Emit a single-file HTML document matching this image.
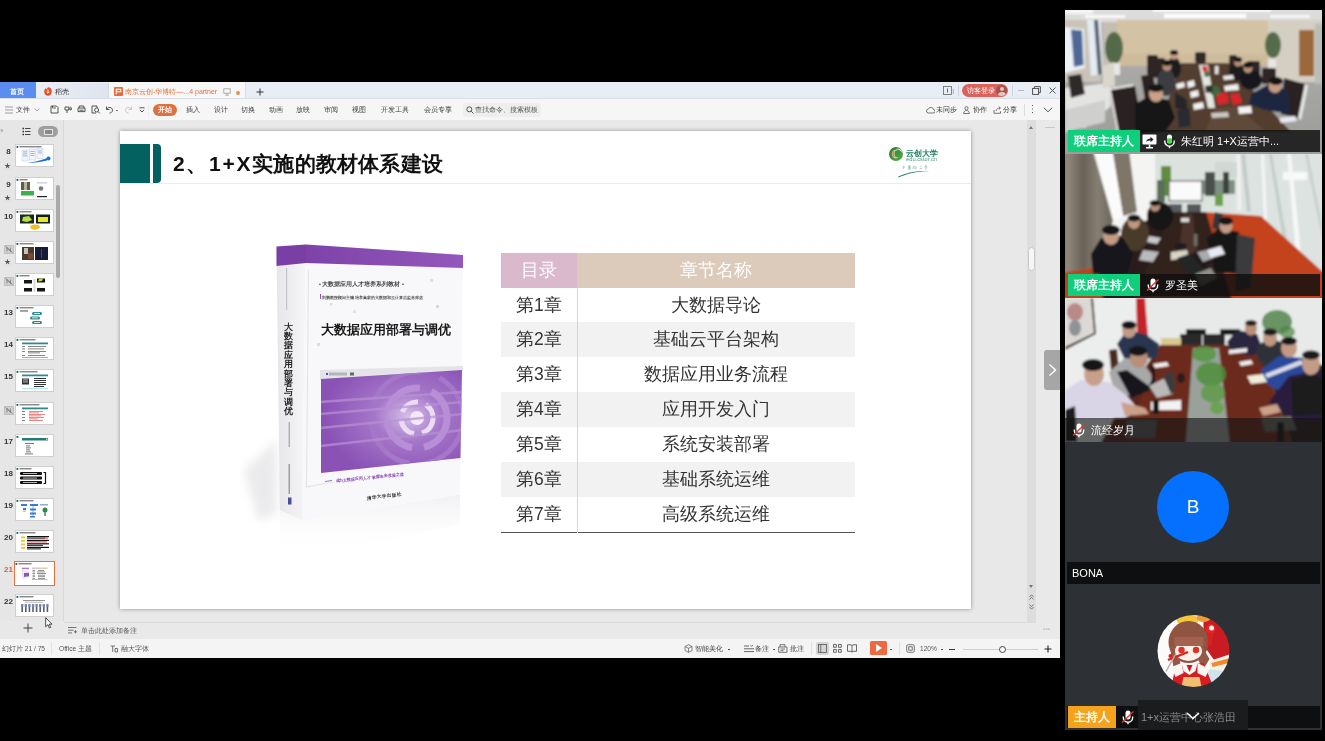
<!DOCTYPE html>
<html lang="zh">
<head>
<meta charset="utf-8">
<title>Meeting</title>
<style>
*{box-sizing:border-box;margin:0;padding:0}
html,body{width:1325px;height:741px;overflow:hidden;background:#000;font-family:"Liberation Sans",sans-serif;}
.a{position:absolute}
#win{position:absolute;left:0;top:82px;width:1060px;height:576px;background:#e8e8e8;overflow:hidden;will-change:transform}
#panel{will-change:transform}
#tabbar{position:absolute;left:0;top:0;width:1060px;height:16px;background:#e9edf6}
#toolbar{position:absolute;left:0;top:16px;width:1060px;height:22px;background:#f6f6f6;border-top:1px solid #d9dde6}
.t8{font-size:8px;color:#444;white-space:nowrap;line-height:10px}
.menu{position:absolute;top:5px;font-size:6.8px;color:#3c3c3c;line-height:10px;white-space:nowrap}
#toolbar>*{margin-top:0.8px}
#left{position:absolute;left:0;top:38px;width:64px;height:501px;background:#e6e6e6;border-right:1px solid #d8d8d8}
.th{position:absolute;left:15px;width:39px;height:23px;background:#fff;border:1px solid #cfcfcf;overflow:hidden}
.num{position:absolute;left:2px;width:13px;text-align:center;font-size:8px;font-weight:bold;color:#333;line-height:9px}
#slide{position:absolute;left:120px;top:49px;width:851px;height:478px;background:#fff;box-shadow:0 0 4px rgba(0,0,0,.38)}
#status{position:absolute;left:0;top:557px;width:1060px;height:19px;background:#f4f4f4}
#notes{position:absolute;left:64px;top:540px;width:972px;height:17px;background:#e9e9e9;border-top:1px solid #dcdcdc}
table{border-collapse:collapse}
#toc{position:absolute;left:381px;top:121.6px;width:354px;border-bottom:1.5px solid #555}
#toc td{height:34.9px;text-align:center;font-size:17.5px;color:#333;padding:0;line-height:34.9px}
#toc td:first-child{width:76px;border-right:1px solid #d4d4d4}
#toc tr:nth-child(odd) td{background:#f2f2f2}
#toc tr:first-child td{background:#dccbbb;color:#fff;height:34.9px}
#toc tr:first-child td:first-child{background:#dbb9cc;border-right:none}
.tile{position:absolute;left:1065px;width:257px;height:144px;overflow:hidden;background:#2d3135}
.bar{position:absolute;left:3px;right:2px;height:22px;background:rgba(16,16,16,.84)}
.lab{position:absolute;left:0;top:0;height:22px;color:#fff;font-size:11.5px;font-weight:bold;line-height:22px;text-align:center;letter-spacing:0.2px}
.nm{position:absolute;top:0;color:#fff;font-size:11px;line-height:22px;white-space:nowrap}
</style>
</head>
<body>
<div id="win">
  <div id="tabbar">
    <div class="a" style="left:0;top:0;width:36px;height:16px;background:#5b8df0"></div>
    <div class="a" style="left:10px;top:4.8px;font-size:7px;line-height:10px;color:#fff;font-weight:bold">首页</div>
    <div class="a" style="left:36px;top:1px;width:73px;height:15px;background:linear-gradient(90deg,#eaeef6,#dfe4ef);border-right:1px solid #d3d9e6"></div>
    <svg class="a" style="left:44px;top:4.8px" width="8" height="9" viewBox="0 0 8 9"><path d="M4 0.3 C6.4 0.3 7.8 2 7.8 4.6 C7.8 7.2 6.2 8.8 4 8.8 C1.8 8.8 0.2 7.2 0.2 4.6 C0.2 3 1 1.6 2 0.9 L2.4 2.6 Z" fill="#ea4c1d"/><path d="M4 2.5v3.3M2.6 4.8L4 6.2l1.4-1.4" stroke="#fff" stroke-width="1" fill="none"/></svg>
    <div class="a" style="left:55px;top:4.8px;font-size:6.7px;line-height:10px;color:#333">稻壳</div>
    <div class="a" style="left:109px;top:0;width:137px;height:17px;background:#f7f7f7;border-right:1px solid #d9dde6"></div>
    <svg class="a" style="left:114px;top:4.8px" width="9" height="9" viewBox="0 0 9 9"><rect width="9" height="9" rx="1" fill="#ea6a3b"/><path d="M2.3 7.2V2.4h4.4v2.4H2.6" stroke="#fff" stroke-width="1.1" fill="none"/></svg>
    <div class="a" style="left:125px;top:4.8px;font-size:7px;line-height:10px;color:#e0703f;white-space:nowrap">南京云创-华博特—...4 partner</div>
    <svg class="a" style="left:223px;top:5.8px" width="8" height="8" viewBox="0 0 8 8"><rect x="0.8" y="0.8" width="6.4" height="4.4" fill="none" stroke="#9a9a9a" stroke-width="0.8"/><path d="M4 5.2v1.8M2.2 7.2h3.6" stroke="#9a9a9a" stroke-width="0.8"/></svg>
    <div class="a" style="left:236px;top:8.8px;width:4px;height:4px;border-radius:2px;background:#e8904f"></div>
    <svg class="a" style="left:256px;top:5.8px" width="8" height="8" viewBox="0 0 8 8"><path d="M4 0.5v7M0.5 4h7" stroke="#333" stroke-width="1"/></svg>
    <svg class="a" style="left:943px;top:4px" width="12" height="10" viewBox="0 0 12 10"><rect x="0.5" y="0.5" width="8" height="8" fill="none" stroke="#666" stroke-width="0.8"/><path d="M4.5 2.5v4" stroke="#555" stroke-width="0.9"/><path d="M10.3 3v5" stroke="#999" stroke-width="0.8"/></svg>
    <div class="a" style="left:958px;top:3px;width:1px;height:11px;background:#cfd3dc"></div>
    <div class="a" style="left:962px;top:2px;width:46px;height:13px;border-radius:7px;background:#d9635d"></div>
    <div class="a" style="left:966.5px;top:4px;font-size:6.8px;line-height:10px;color:#fff;white-space:nowrap">访客登录</div>
    <div class="a" style="left:996px;top:3px;width:11px;height:11px;border-radius:6px;background:#a8504e;overflow:hidden"><div class="a" style="left:3.5px;top:1.5px;width:4px;height:4px;border-radius:2px;background:#e6c4c2"></div><div class="a" style="left:1.5px;top:7.3px;width:8px;height:7px;border-radius:4px;background:#e6c4c2"></div></div>
    <div class="a" style="left:1012px;top:3px;width:1px;height:11px;background:#cfd3dc"></div>
    <div class="a" style="left:1018px;top:8px;width:6px;height:1px;background:#bbb"></div>
    <svg class="a" style="left:1032px;top:4px" width="9" height="9" viewBox="0 0 9 9"><rect x="0.6" y="2.4" width="6" height="6" fill="none" stroke="#444" stroke-width="0.9"/><path d="M2.4 2.4V0.6h6v6H6.6" fill="none" stroke="#444" stroke-width="0.9"/></svg>
    <svg class="a" style="left:1049px;top:5px" width="7" height="7" viewBox="0 0 7 7"><path d="M0.5 0.5l6 6M6.5 0.5l-6 6" stroke="#444" stroke-width="0.9"/></svg>
  </div>
  <div id="toolbar">
    <svg class="a" style="left:5px;top:6px" width="8" height="8" viewBox="0 0 8 8"><path d="M0 1h8M0 4h8M0 7h8" stroke="#666" stroke-width="0.6"/></svg>
    <div class="menu" style="left:16px">文件</div>
    <svg class="a" style="left:34px;top:8px" width="6" height="4" viewBox="0 0 6 4"><path d="M0.5 0.5l2.5 2.5l2.5-2.5" stroke="#888" stroke-width="0.7" fill="none"/></svg>
    <svg class="a" style="left:50px;top:5px" width="9" height="9" viewBox="0 0 9 9"><path d="M1 1h5.5l1.5 1.5v5.5h-7z" fill="none" stroke="#444" stroke-width="0.9"/><path d="M2.5 1v2h3.5" fill="none" stroke="#444" stroke-width="0.8"/></svg>
    <svg class="a" style="left:64px;top:5px" width="9" height="9" viewBox="0 0 9 9"><path d="M1 2h4v3h-4zM4 4h4M6 2c2 0 2 3 0 3M3 5v3" fill="none" stroke="#444" stroke-width="0.9"/></svg>
    <svg class="a" style="left:77px;top:5px" width="9" height="9" viewBox="0 0 9 9"><path d="M2.2 3V1h4.6v2M1 3h7v3.6h-7zM2.4 5.2h4.2" fill="none" stroke="#444" stroke-width="0.9"/></svg>
    <svg class="a" style="left:91px;top:5px" width="10" height="9" viewBox="0 0 10 9"><path d="M5 8h-4v-7h5v2" fill="none" stroke="#444" stroke-width="0.9"/><circle cx="5.6" cy="5" r="2" fill="none" stroke="#444" stroke-width="0.9"/><path d="M7 6.6l1.8 1.8" stroke="#444" stroke-width="0.9"/></svg>
    <svg class="a" style="left:105px;top:5px" width="9" height="9" viewBox="0 0 9 9"><path d="M1.5 1.5v3h3M1.7 4.3C3 1.5 7.5 2 7.5 5.2 7.500 7 6 8 4.500 8" fill="none" stroke="#444" stroke-width="0.9"/></svg>
    <div class="a" style="left:116px;top:10px;width:2px;height:1px;background:#777"></div>
    <svg class="a" style="left:124px;top:5px" width="9" height="9" viewBox="0 0 9 9"><path d="M7.500 1.500v3h-3M7.300 4.300C6 1.500 1.500 2 1.500 5.200 1.500 7 3 8 4.500 8" fill="none" stroke="#c4c4c4" stroke-width="0.9"/></svg>
    <svg class="a" style="left:139px;top:7px" width="6" height="6" viewBox="0 0 6 6"><path d="M0.500 0.800h5M0.800 2.800l2.200 2.200l2.200-2.200" fill="none" stroke="#444" stroke-width="0.9"/></svg>
    <div class="a" style="left:148px;top:3px;width:1px;height:14px;background:#ebebeb"></div>
    <div class="a" style="left:153px;top:4px;width:24px;height:12px;border-radius:6px;background:#e0703f;color:#fff;font-size:7px;font-weight:bold;line-height:12px;text-align:center">开始</div>
    <div class="menu" style="left:186px">插入</div><div class="menu" style="left:214px">设计</div><div class="menu" style="left:241px">切换</div><div class="menu" style="left:269px">动画</div><div class="menu" style="left:296px">放映</div><div class="menu" style="left:324px">审阅</div><div class="menu" style="left:352px">视图</div><div class="menu" style="left:381px">开发工具</div><div class="menu" style="left:424px">会员专享</div>
    <div class="a" style="left:463px;top:3px;width:78px;height:14px;border-radius:3px;background:#eeeeee"></div>
    <svg class="a" style="left:466px;top:6px" width="8" height="8" viewBox="0 0 8 8"><circle cx="3.300" cy="3.300" r="2.500" fill="none" stroke="#444" stroke-width="0.9"/><path d="M5.200 5.200l2.300 2.300" stroke="#444" stroke-width="0.9"/></svg>
    <div class="menu" style="left:475px;color:#555;font-size:6.7px">查找命令、搜索模板</div>
    <svg class="a" style="left:926px;top:6px" width="9" height="8" viewBox="0 0 9 8"><path d="M2.500 7a2 2 0 0 1 0-4a2.600 2.600 0 0 1 5 0.600a1.700 1.700 0 0 1 -0.300 3.400z" fill="none" stroke="#555" stroke-width="0.8"/></svg>
    <div class="menu" style="left:936px">未同步</div>
    <svg class="a" style="left:963px;top:6px" width="8" height="8" viewBox="0 0 8 8"><circle cx="3.500" cy="2.200" r="1.600" fill="none" stroke="#555" stroke-width="0.8"/><path d="M0.600 7.500c0-4 5.800-4 5.800 0z" fill="none" stroke="#555" stroke-width="0.8"/></svg>
    <div class="menu" style="left:973px">协作</div>
    <svg class="a" style="left:993px;top:6px" width="9" height="8" viewBox="0 0 9 8"><path d="M1 4v3.300h6.500v-2M3 5c0.500-2.500 2.500-3 4-3M5.800 0.500l1.700 1.500l-1.700 1.500" fill="none" stroke="#555" stroke-width="0.8"/></svg>
    <div class="menu" style="left:1003px">分享</div>
    <div class="a" style="left:1024px;top:4px;width:1px;height:12px;background:#dcdcdc"></div>
    <div class="a" style="left:1032px;top:5px;width:1.2px;height:1.2px;background:#555;box-shadow:0 3.5px 0 #555,0 7px 0 #555"></div>
    <svg class="a" style="left:1043px;top:7px" width="10" height="6" viewBox="0 0 10 6"><path d="M0.800 0.800l4.200 4l4.200-4" fill="none" stroke="#444" stroke-width="0.9"/></svg>
  </div>
  <div id="left">
    <div class="a" style="left:0;top:7px;font-size:7px;line-height:8px;color:#999;letter-spacing:-1px">››</div>
    <svg class="a" style="left:22px;top:7px" width="9" height="9" viewBox="0 0 9 9"><path d="M0.500 1.500h1.500M0.500 4.500h1.500M0.500 7.500h1.500" stroke="#333" stroke-width="1.400"/><path d="M3 1.500h5.500M3 4.500h5.500M3 7.500h5.500" stroke="#333" stroke-width="0.900"/></svg>
    <div class="a" style="left:38px;top:6px;width:20px;height:11px;border-radius:6px;background:#9e9e9e"></div>
    <div class="a" style="left:43.500px;top:8.500px;width:9px;height:6px;border:1px solid #e4e4e4;background:#8a8a8a"></div>
    <div class="a" style="left:56px;top:65px;width:4px;height:93px;border-radius:2px;background:#a9a9a9"></div>
    <div class="th" style="top:24.3px;"><svg class="a" style="left:-1px;top:-1px" width="39" height="23" viewBox="0 0 39 23"><rect x="1.500" y="2" width="1.800" height="1.800" fill="#03615f"/><rect x="4.500" y="2.300" width="22" height="1" fill="#555"/><g fill="#f2f5fb" stroke="#a9bce0" stroke-width="0.400"><rect x="7" y="6" width="6" height="11"/><rect x="14.500" y="5" width="6" height="11"/><rect x="22" y="4.500" width="6" height="10"/></g><g fill="#8fa3c8"><rect x="8" y="7.500" width="4" height="0.800"/><rect x="8" y="9.500" width="4" height="0.800"/><rect x="8" y="11.500" width="4" height="0.800"/><rect x="15.500" y="7" width="4" height="0.800"/><rect x="15.500" y="9" width="4" height="0.800"/><rect x="15.500" y="11" width="4" height="0.800"/><rect x="23" y="6.500" width="4" height="0.800"/><rect x="23" y="8.500" width="4" height="0.800"/></g><path d="M12 19c8-1 16-3 21-5.500l-1 3c-6 1.500-13 2.500-20 2.500z" fill="#1f6fd0"/><circle cx="33.500" cy="14.500" r="2" fill="#1f6fd0"/></svg></div><div class="num" style="top:27.3px;color:#333">8</div><div class="a" style="left:3.5px;top:41.8px;font-size:7px;line-height:8px;color:#555">★</div><div class="th" style="top:56.5px;"><svg class="a" style="left:-1px;top:-1px" width="39" height="23" viewBox="0 0 39 23"><rect x="1.500" y="2" width="1.800" height="1.800" fill="#03615f"/><rect x="4.500" y="2.300" width="8" height="1" fill="#555"/><rect x="6" y="5" width="9" height="8" fill="#5a6048"/><rect x="9" y="5" width="3" height="8" fill="#b8b4a0"/><rect x="6" y="14" width="13" height="4.500" fill="#3cb04c"/><circle cx="26" cy="11.500" r="2.300" fill="#7a7a7a"/><rect x="22" y="5.500" width="10" height="0.800" fill="#9ad"/><rect x="22" y="19" width="10" height="1.200" fill="#222"/></svg></div><div class="num" style="top:59.5px;color:#333">9</div><div class="a" style="left:3.5px;top:74.0px;font-size:7px;line-height:8px;color:#555">★</div><div class="th" style="top:88.6px;"><svg class="a" style="left:-1px;top:-1px" width="39" height="23" viewBox="0 0 39 23"><rect x="1.500" y="2" width="1.800" height="1.800" fill="#03615f"/><rect x="4.500" y="2.300" width="12" height="1" fill="#555"/><rect x="5" y="5.500" width="14" height="9" fill="#1a2a2a"/><polygon points="8,8 14,7 17,11 12,13 7,12" fill="#b8e038"/><rect x="21" y="5.500" width="14" height="9" fill="#14201c"/><rect x="23" y="8" width="10" height="5" fill="#e8e820"/><polygon points="15,17 19,15.500 24,16 25,19 20,21 16,20" fill="#f0c020"/></svg></div><div class="num" style="top:91.6px;color:#333">10</div><div class="th" style="top:120.8px;"><svg class="a" style="left:-1px;top:-1px" width="39" height="23" viewBox="0 0 39 23"><rect x="1.500" y="2" width="1.800" height="1.800" fill="#03615f"/><rect x="4.500" y="2.300" width="14" height="1" fill="#555"/><rect x="7" y="6" width="12" height="13" fill="#4a3a2e"/><rect x="9" y="7" width="4" height="6" fill="#c8c0b0"/><rect x="13" y="12" width="5" height="6" fill="#7a4a30"/><rect x="20" y="6" width="13" height="13" fill="#141c38"/><rect x="26" y="8" width="1" height="9" fill="#3a4a78"/></svg></div><svg class="a" style="left:4px;top:124.8px" width="10" height="9" viewBox="0 0 10 9"><rect x="0.500" y="0.500" width="9" height="8" fill="#cfcfcf" stroke="#9a9a9a" stroke-width="0.700" stroke-dasharray="1.200 0.800"/><path d="M1.500 1.500l7 6M3 2.500v4M3 2.500l3.500 4v-4" stroke="#777" stroke-width="0.800" fill="none"/></svg><div class="a" style="left:3.5px;top:138.2px;font-size:7px;line-height:8px;color:#555">★</div><div class="th" style="top:152.9px;"><svg class="a" style="left:-1px;top:-1px" width="39" height="23" viewBox="0 0 39 23"><rect x="1.500" y="2" width="1.800" height="1.800" fill="#03615f"/><rect x="4.500" y="2.300" width="10" height="1" fill="#555"/><g fill="#151515"><rect x="9" y="7" width="8" height="3.500"/><rect x="22" y="5.500" width="8" height="4"/><rect x="9" y="15" width="8" height="3.500"/><rect x="22" y="15" width="8" height="3.500"/></g><rect x="18.500" y="6" width="2" height="13" fill="#d8dde2"/><polygon points="24,6 28,5.500 27,8 23,8.500" fill="#c8d820"/></svg></div><svg class="a" style="left:4px;top:156.9px" width="10" height="9" viewBox="0 0 10 9"><rect x="0.500" y="0.500" width="9" height="8" fill="#cfcfcf" stroke="#9a9a9a" stroke-width="0.700" stroke-dasharray="1.200 0.800"/><path d="M1.500 1.500l7 6M3 2.500v4M3 2.500l3.500 4v-4" stroke="#777" stroke-width="0.800" fill="none"/></svg><div class="th" style="top:185.1px;"><svg class="a" style="left:-1px;top:-1px" width="39" height="23" viewBox="0 0 39 23"><rect x="1.500" y="2" width="1.800" height="1.800" fill="#03615f"/><rect x="4.500" y="2.300" width="14" height="1" fill="#555"/><rect x="5" y="5.500" width="8" height="0.900" fill="#333"/><g fill="#2f8a8a"><rect x="17" y="7" width="10" height="3" rx="1.500"/><rect x="15" y="11.500" width="10" height="3" rx="1.500"/><rect x="17" y="16" width="10" height="3" rx="1.500"/></g><g fill="#fff"><rect x="19" y="8" width="6" height="0.800"/><rect x="17" y="12.500" width="6" height="0.800"/><rect x="19" y="17" width="6" height="0.800"/></g></svg></div><div class="num" style="top:188.1px;color:#333">13</div><div class="th" style="top:217.2px;"><svg class="a" style="left:-1px;top:-1px" width="39" height="23" viewBox="0 0 39 23"><rect x="1.500" y="2" width="1.800" height="1.800" fill="#03615f"/><rect x="4.500" y="2.300" width="16" height="1" fill="#555"/><rect x="7" y="5.500" width="26" height="1.800" fill="#2f8a8a"/><g fill="#666"><rect x="7" y="9" width="3" height="0.800"/><rect x="13" y="9" width="18" height="0.800"/><rect x="7" y="11.500" width="3" height="0.800"/><rect x="13" y="11.500" width="16" height="0.800"/><rect x="7" y="14" width="3" height="0.800"/><rect x="13" y="14" width="18" height="0.800"/><rect x="13" y="15.500" width="12" height="0.800"/><rect x="7" y="18" width="3" height="0.800"/><rect x="13" y="18" width="17" height="0.800"/></g><rect x="7" y="20" width="26" height="0.600" fill="#2f8a8a"/></svg></div><div class="num" style="top:220.2px;color:#333">14</div><div class="th" style="top:249.4px;"><svg class="a" style="left:-1px;top:-1px" width="39" height="23" viewBox="0 0 39 23"><rect x="1.500" y="2" width="1.800" height="1.800" fill="#03615f"/><rect x="4.500" y="2.300" width="18" height="1" fill="#555"/><rect x="7" y="5.500" width="26" height="1.800" fill="#2f8a8a"/><g fill="#333"><rect x="7" y="9.500" width="7" height="6"/><rect x="19" y="9" width="12" height="1"/><rect x="19" y="11" width="12" height="1"/><rect x="19" y="13" width="12" height="1"/><rect x="19" y="15" width="12" height="1"/><rect x="19" y="17" width="10" height="1"/></g><rect x="8" y="10.500" width="5" height="0.800" fill="#ddd"/><rect x="8" y="12.500" width="5" height="0.800" fill="#ddd"/><rect x="7" y="19.500" width="26" height="0.600" fill="#7cc"/></svg></div><div class="num" style="top:252.4px;color:#333">15</div><div class="th" style="top:281.5px;"><svg class="a" style="left:-1px;top:-1px" width="39" height="23" viewBox="0 0 39 23"><rect x="1.500" y="2" width="1.800" height="1.800" fill="#03615f"/><rect x="4.500" y="2.300" width="20" height="1" fill="#555"/><rect x="7" y="5.500" width="26" height="1.800" fill="#2f8a8a"/><g fill="#666"><rect x="7" y="9" width="3" height="0.800"/><rect x="7" y="12" width="3" height="0.800"/><rect x="7" y="15" width="3" height="0.800"/><rect x="7" y="18" width="3" height="0.800"/></g><g fill="#e46a6a"><rect x="14" y="9" width="14" height="0.800"/><rect x="14" y="10.500" width="10" height="0.800"/><rect x="14" y="12" width="16" height="0.800"/><rect x="14" y="13.500" width="12" height="0.800"/><rect x="14" y="15" width="15" height="0.800"/><rect x="14" y="16.500" width="9" height="0.800"/><rect x="14" y="18" width="14" height="0.800"/></g></svg></div><svg class="a" style="left:4px;top:285.5px" width="10" height="9" viewBox="0 0 10 9"><rect x="0.500" y="0.500" width="9" height="8" fill="#cfcfcf" stroke="#9a9a9a" stroke-width="0.700" stroke-dasharray="1.200 0.800"/><path d="M1.500 1.500l7 6M3 2.500v4M3 2.500l3.500 4v-4" stroke="#777" stroke-width="0.800" fill="none"/></svg><div class="th" style="top:313.6px;"><svg class="a" style="left:-1px;top:-1px" width="39" height="23" viewBox="0 0 39 23"><rect x="1.500" y="2" width="1.800" height="1.800" fill="#03615f"/><rect x="4.500" y="2.300" width="0" height="1" fill="#555"/><rect x="7" y="4" width="26" height="2.500" fill="#1f7a7a"/><rect x="31" y="4.500" width="1.500" height="1.500" fill="#e8d040"/><g fill="#555"><rect x="10" y="9" width="9" height="0.800"/><rect x="11" y="11.500" width="4" height="0.800"/><rect x="11" y="13.500" width="5" height="0.800"/><rect x="11" y="15.500" width="4" height="0.800"/><rect x="11" y="17.500" width="5" height="0.800"/><rect x="10" y="19.500" width="8" height="0.800"/></g></svg></div><div class="num" style="top:316.6px;color:#333">17</div><div class="th" style="top:345.8px;"><svg class="a" style="left:-1px;top:-1px" width="39" height="23" viewBox="0 0 39 23"><rect x="1.500" y="2" width="1.800" height="1.800" fill="#03615f"/><rect x="4.500" y="2.300" width="12" height="1" fill="#555"/><g fill="#111"><rect x="5" y="6" width="22" height="3" rx="1"/><rect x="5" y="10.500" width="22" height="3" rx="1"/><rect x="5" y="15" width="22" height="3" rx="1"/></g><g fill="#fff"><rect x="8" y="7.200" width="14" height="0.700"/><rect x="8" y="11.700" width="14" height="0.700"/><rect x="8" y="16.200" width="14" height="0.700"/></g><path d="M28.500 6.500h2v11h-2" fill="none" stroke="#111" stroke-width="1.200"/></svg></div><div class="num" style="top:348.8px;color:#333">18</div><div class="th" style="top:377.9px;"><svg class="a" style="left:-1px;top:-1px" width="39" height="23" viewBox="0 0 39 23"><rect x="1.500" y="2" width="1.800" height="1.800" fill="#03615f"/><rect x="4.500" y="2.300" width="14" height="1" fill="#555"/><g fill="#3a7ad8"><rect x="6" y="6" width="6" height="2"/><rect x="15" y="6" width="8" height="2"/><rect x="8" y="10" width="3" height="2"/><rect x="15" y="10.500" width="6" height="2"/><rect x="15" y="14.500" width="6" height="2"/><rect x="15" y="18" width="5" height="1.500"/></g><rect x="8" y="12.500" width="3" height="1.500" fill="#e8d040"/><path d="M18 8v10" stroke="#3a7ad8" stroke-width="0.600"/><ellipse cx="30" cy="12" rx="2.500" ry="2.500" fill="#2f8a4a"/><rect x="29.300" y="13" width="1.400" height="5" fill="#2f8a4a"/><rect x="25" y="6" width="8" height="1.500" fill="#9ac"/></svg></div><div class="num" style="top:380.9px;color:#333">19</div><div class="th" style="top:410.1px;"><svg class="a" style="left:-1px;top:-1px" width="39" height="23" viewBox="0 0 39 23"><rect x="1.500" y="2" width="1.800" height="1.800" fill="#03615f"/><rect x="4.500" y="2.300" width="16" height="1" fill="#555"/><g fill="#e8c830"><rect x="6" y="6.500" width="4" height="1.800"/><rect x="6" y="10" width="4" height="1.800"/><rect x="6" y="13.500" width="4" height="1.800"/><rect x="6" y="17" width="4" height="1.800"/></g><g fill="#111"><rect x="12" y="6" width="22" height="1.200"/><rect x="12" y="7.600" width="18" height="1"/><rect x="12" y="9.800" width="22" height="1.200"/><rect x="12" y="13.200" width="22" height="1.200"/><rect x="12" y="14.800" width="16" height="1"/><rect x="12" y="16.800" width="22" height="1.200"/><rect x="12" y="18.400" width="14" height="1"/></g><rect x="12" y="11.400" width="20" height="1" fill="#d84040"/><rect x="28" y="7.600" width="5" height="1" fill="#d84040"/></svg></div><div class="num" style="top:413.1px;color:#333">20</div><div class="th" style="top:442.2px;border:1.5px solid #e8703f;left:14px;width:41px;height:25px;margin-top:-1px;"><svg class="a" style="left:-1px;top:-1px" width="39" height="23" viewBox="0 0 39 23"><rect x="1.500" y="2" width="1.800" height="1.800" fill="#03615f"/><rect x="4.500" y="2.300" width="13" height="1" fill="#555"/><polygon points="8,7 9.500,6.800 9.500,17.800 8,17.400" fill="#e4e4ea"/><polygon points="9.500,6.800 15,7.200 15,16.600 9.500,17.800" fill="#f0f0f4" stroke="#ddd" stroke-width="0.200"/><polygon points="10,12 15,11.800 15,15.200 10,16" fill="#8d55b8"/><rect x="8" y="6.800" width="7" height="0.900" fill="#8a4db5"/><rect x="18" y="6.500" width="3.500" height="1.600" fill="#dbb9cc"/><rect x="21.500" y="6.500" width="12" height="1.600" fill="#dccbbb"/><g fill="#666"><rect x="18.500" y="9" width="2.500" height="0.700"/><rect x="24" y="9" width="6" height="0.700"/><rect x="18.500" y="10.600" width="2.500" height="0.700"/><rect x="23" y="10.600" width="8" height="0.700"/><rect x="18.500" y="12.200" width="2.500" height="0.700"/><rect x="23" y="12.200" width="9" height="0.700"/><rect x="18.500" y="13.800" width="2.500" height="0.700"/><rect x="24" y="13.800" width="7" height="0.700"/><rect x="18.500" y="15.400" width="2.500" height="0.700"/><rect x="24" y="15.400" width="7" height="0.700"/><rect x="18.500" y="17" width="2.500" height="0.700"/><rect x="24" y="17" width="7" height="0.700"/></g><rect x="18" y="18.500" width="15.500" height="0.400" fill="#555"/></svg></div><div class="num" style="top:445.2px;color:#d8632f">21</div><div class="th" style="top:474.4px;"><svg class="a" style="left:-1px;top:-1px" width="39" height="23" viewBox="0 0 39 23"><rect x="1.500" y="2" width="1.800" height="1.800" fill="#03615f"/><rect x="4.500" y="2.300" width="14" height="1" fill="#555"/><rect x="8" y="6" width="22" height="0.800" fill="#777"/><rect x="10" y="7.800" width="18" height="0.700" fill="#999"/><rect x="6.0" y="10" width="2.400" height="3" fill="#7a8aa8"/><rect x="6.4" y="13" width="1.600" height="5" fill="#555e70"/><rect x="9.6" y="10" width="2.400" height="3" fill="#7a8aa8"/><rect x="10.0" y="13" width="1.600" height="5" fill="#555e70"/><rect x="13.2" y="10" width="2.400" height="3" fill="#7a8aa8"/><rect x="13.6" y="13" width="1.600" height="5" fill="#555e70"/><rect x="16.8" y="10" width="2.400" height="3" fill="#7a8aa8"/><rect x="17.2" y="13" width="1.600" height="5" fill="#555e70"/><rect x="20.4" y="10" width="2.400" height="3" fill="#7a8aa8"/><rect x="20.8" y="13" width="1.600" height="5" fill="#555e70"/><rect x="24.0" y="10" width="2.400" height="3" fill="#7a8aa8"/><rect x="24.4" y="13" width="1.600" height="5" fill="#555e70"/><rect x="27.6" y="10" width="2.400" height="3" fill="#7a8aa8"/><rect x="28.0" y="13" width="1.600" height="5" fill="#555e70"/><rect x="31.2" y="10" width="2.400" height="3" fill="#7a8aa8"/><rect x="31.6" y="13" width="1.600" height="5" fill="#555e70"/></svg></div><div class="num" style="top:477.4px;color:#333">22</div>
  </div>
  <svg class="a" style="left:23px;top:541px" width="10" height="10" viewBox="0 0 10 10"><path d="M5 0.500v9M0.500 5h9" stroke="#333" stroke-width="0.900"/></svg>
  <svg class="a" style="left:45px;top:535px" width="8" height="12" viewBox="0 0 8 12"><path d="M0.700 0.700v9l2.200-2l1.500 3.300l1.300-0.600l-1.500-3.200h2.800z" fill="#fff" stroke="#222" stroke-width="0.800"/></svg>
  <div id="slide">
    <div class="a" style="left:0;top:13px;width:30px;height:39px;background:#03615f"></div>
    <div class="a" style="left:33px;top:13px;width:8px;height:39px;background:#03615f;border-radius:0 4px 4px 0"></div>
    <div class="a" style="left:0;top:52px;width:851px;height:1px;background:#ececec"></div>
    <div class="a" id="title" style="left:53px;top:19px;font-size:21px;font-weight:bold;line-height:28px;color:#111;white-space:nowrap;letter-spacing:0.2px"><span style="letter-spacing:1.7px">2、1+X</span>实施的教材体系建设</div>
    <!--LOGO--><svg class="a" style="left:760px;top:9px" width="70" height="45" viewBox="880 140 70 45"><defs><linearGradient id="lg" x1="0" y1="0" x2="1" y2="1"><stop offset="0" stop-color="#1f7a3a"/><stop offset="1" stop-color="#5cae48"/></linearGradient><filter id="lb"><feGaussianBlur stdDeviation="0.250"/></filter></defs><g filter="url(#lb)"><circle cx="896" cy="154" r="7" fill="url(#lg)"/><path d="M897.800 150.200a4.200 4.200 0 1 0 0.400 7.400a3.100 3.100 0 1 1 -0.400 -7.400z" fill="#ffffff"/><path d="M897 150.600a3.600 3.600 0 1 0 0.200 6.600a2.600 2.600 0 1 1 -0.200 -6.600z" fill="#ee7a1c"/><path d="M895.500 149.300c3.500-1.500 7 1 7 4.200c-0.800-2.600-3.600-4.400-7-4.200z" fill="#ffffff"/><text x="906" y="156" font-family="Liberation Sans, sans-serif" font-size="7.600" font-weight="bold" fill="#1d7d5a" letter-spacing="-0.100">云创大学</text><text x="906" y="161" font-family="Liberation Sans, sans-serif" font-size="5.200" fill="#4c9a7c" textLength="31" lengthAdjust="spacingAndGlyphs">edu.cstor.cn</text><g stroke="#5aa587" stroke-width="0.500" fill="none"><path d="M903.200 165.500l0.300 3.500M904.500 166.500l-0.500 1.500"/><path d="M908 166.200h2.600M909.300 165.200v4.600M908 167.600l2.600 0M908.200 169.500l1.100-1.500l1.300 1.500"/><path d="M913.500 165.800l-0.700 3.200M914.800 165.500l0.200 4M915.500 166.500l1.200 1l-1.400 1.500"/><path d="M919.800 166.500l1.800-0.300M919.500 168.800l2.600-0.400"/><path d="M925 165.300l1.500 0.300M924.200 166.800h3.200M925.800 166.800c0.500 1.200 0.300 2.400-0.800 3.200"/></g><path d="M898 176.800c8-4.200 20-6.800 33-5.400c-12-0.500-23 2-32.600 6.200z" fill="#2a8a5c"/></g></svg><!--/LOGO-->
    <!--BOOK--><svg class="a" style="left:110px;top:99px" width="250" height="340" viewBox="230 230 250 340"><defs><filter id="bb"><feGaussianBlur stdDeviation="5"/></filter><filter id="bb2"><feGaussianBlur stdDeviation="0.5"/></filter><linearGradient id="pg" x1="0" y1="0" x2="1" y2="0"><stop offset="0" stop-color="#7e43a8"/><stop offset="1" stop-color="#9458bd"/></linearGradient><linearGradient id="sp" x1="0" y1="0" x2="1" y2="0"><stop offset="0" stop-color="#e6e6ea"/><stop offset="1" stop-color="#f6f6f8"/></linearGradient><linearGradient id="rf" x1="0" y1="0" x2="0" y2="1"><stop offset="0" stop-color="#dcdce2" stop-opacity="0.400"/><stop offset="1" stop-color="#ffffff" stop-opacity="0"/></linearGradient><radialGradient id="gx" cx="0.620" cy="0.450" r="0.600"><stop offset="0" stop-color="#d6bfe8"/><stop offset="0.400" stop-color="#a577c9"/><stop offset="1" stop-color="#8a52b5"/></radialGradient><clipPath id="gc"><polygon points="321,379 462,370 460.500,458 321,473"/></clipPath></defs><polygon points="244,470 277,440 277,514 258,520" fill="#bdbdc4" opacity="0.300" filter="url(#bb)"/><polygon points="279.800,510 302,520.500 460,494.600 460,524 302,560 280,546" fill="url(#rf)"/><polygon points="276.500,246.500 306,244.500 302,520.500 279.800,510" fill="url(#sp)"/><polygon points="306,244.500 463,255 460,494.600 302,520.500" fill="#f8f8fa"/><polygon points="276.500,246.500 306,244.500 306,263 276.500,266" fill="#7a3fa4"/><polygon points="306,244.500 463,255 463,268 306,263" fill="url(#pg)"/><polygon points="320,370 463,366 463,371 320,380" fill="#e3e3e8"/><polygon points="321,379 462,370 460.500,458 321,473" fill="url(#gx)"/><g clip-path="url(#gc)" fill="none" filter="url(#bb2)"><circle cx="417" cy="418" r="16" stroke="#e9dcf3" stroke-width="5" stroke-dasharray="20 8"/><circle cx="417" cy="418" r="30" stroke="#b88ed6" stroke-width="7" stroke-dasharray="40 12"/><circle cx="417" cy="418" r="46" stroke="#a477c8" stroke-width="5" stroke-dasharray="60 20"/><circle cx="417" cy="418" r="7" fill="#f1e8f8" stroke="none"/><path d="M320 402L463 392M320 414L463 402M320 428L463 414M320 446L463 430" stroke="#b890d6" stroke-width="2.500" opacity="0.700"/></g><path d="M308.500 270L306.500 487L333 482" fill="none" stroke="#d4d4da" stroke-width="0.600"/><rect x="326" y="373" width="2" height="2" fill="#7a3fa4"/><rect x="329" y="372.500" width="18" height="3" fill="#b4b4bb"/><rect x="350" y="372.500" width="4" height="3" fill="#66666c"/><text x="319" y="286" font-family="Liberation Sans, sans-serif" font-size="5.500" font-weight="bold" fill="#444">• 大数据应用人才培养系列教材 •</text><rect x="320" y="294" width="1" height="5" fill="#8a4db5"/><text x="322" y="298.500" font-family="Liberation Sans, sans-serif" font-size="3.900" font-weight="bold" fill="#555">刘鹏教授顾问主编 培养高薪的大数据和云计算总监首席选</text><text x="320.500" y="334" font-family="Liberation Sans, sans-serif" font-size="13.100" font-weight="bold" fill="#1a1a1a">大数据应用部署与调优</text><rect x="325" y="481" width="7" height="0.800" fill="#8a4db5" transform="rotate(-6 325 481)"/><text x="335.500" y="482.500" transform="rotate(-6 335.500 482.500)" font-family="Liberation Sans, sans-serif" font-size="4" font-weight="bold" fill="#8a4db5">成为大数据应用人才 掌握未来发展之道</text><text x="367" y="499.500" transform="rotate(-6.500 367 499.500)" font-family="Liberation Sans, sans-serif" font-size="4.600" font-weight="bold" fill="#333">清华大学出版社</text><g font-family="Liberation Sans, sans-serif" font-size="8.500" font-weight="bold" fill="#222" text-anchor="middle"><text x="288.500" y="329.5">大</text><text x="288.500" y="338.9">数</text><text x="288.500" y="348.3">据</text><text x="288.500" y="357.7">应</text><text x="288.500" y="367.1">用</text><text x="288.500" y="376.5">部</text><text x="288.500" y="385.9">署</text><text x="288.500" y="395.3">与</text><text x="288.500" y="404.7">调</text><text x="288.500" y="414.1">优</text></g><rect x="286" y="268" width="1.200" height="42" fill="#c4c4cb"/><rect x="288.500" y="422" width="1.500" height="25" fill="#b0b0b8"/><rect x="288.500" y="464" width="1.500" height="30" fill="#9c9ca4"/><rect x="288" y="497.500" width="3.500" height="7" fill="#4a4f9a"/><rect x="330" y="303" width="2.500" height="2.500" fill="#dcdce2"/><rect x="430" y="279" width="3" height="3" fill="#dcdce2"/><rect x="436" y="305" width="3" height="3" fill="#d8d8e0"/><rect x="317" y="343" width="3" height="3" fill="#dcdce2"/><rect x="353" y="310" width="3" height="3" fill="#e2e2e8"/></svg><!--/BOOK-->
    <table id="toc"><tr><td>目录</td><td>章节名称</td></tr><tr><td>第1章</td><td>大数据导论</td></tr><tr><td>第2章</td><td>基础云平台架构</td></tr><tr><td>第3章</td><td>数据应用业务流程</td></tr><tr><td>第4章</td><td>应用开发入门</td></tr><tr><td>第5章</td><td>系统安装部署</td></tr><tr><td>第6章</td><td>基础系统运维</td></tr><tr><td>第7章</td><td>高级系统运维</td></tr></table>
  </div>
  <div id="notes">
    <svg class="a" style="left:4px;top:4px" width="9" height="7" viewBox="0 0 9 7"><path d="M0 0.500h8.500M0 3.200h5.500M0 5.900h4M6 4.800h3M7.500 3.300v3" stroke="#555" stroke-width="0.800"/></svg>
    <div class="a t8" style="left:17px;top:2.5px;color:#555;font-size:6.6px">单击此处添加备注</div>
    <div class="a" style="left:972px;top:0;width:24px;height:17px;background:#e8e8e8"></div>
  </div>
  <div class="a" style="left:1027px;top:38px;width:9px;height:502px;background:#dddddd"></div>
  <div class="a" style="left:1036px;top:38px;width:24px;height:519px;background:#e9e9e9"></div>
  <div class="a" style="left:1027.5px;top:165px;width:7.5px;height:24px;border-radius:3.5px;background:#f6f6f6;border:1px solid #c9c9c9"></div>
  <div class="a" style="left:1029px;top:44px;width:0;height:0;border-left:2.500px solid transparent;border-right:2.500px solid transparent;border-bottom:3px solid #777"></div>
  <div class="a" style="left:1045px;top:45px;width:10px;height:1px;background:#c8c8c8"></div>
  <div class="a" style="left:1029px;top:503px;width:0;height:0;border-left:2.500px solid transparent;border-right:2.500px solid transparent;border-top:3px solid #777"></div>
  <svg class="a" style="left:1029px;top:512px" width="5" height="6" viewBox="0 0 5 6"><path d="M0.500 3l2-2.200l2 2.200M0.500 5.500l2-2.200l2 2.200" stroke="#666" stroke-width="0.800" fill="none"/></svg>
  <svg class="a" style="left:1029px;top:522px" width="5" height="6" viewBox="0 0 5 6"><path d="M0.500 0.500l2 2.200l2-2.200M0.500 3l2 2.200l2-2.200" stroke="#666" stroke-width="0.800" fill="none"/></svg>
  <div class="a" style="left:1043px;top:543px;font-size:6px;line-height:8px;color:#555;letter-spacing:0.300px">◦◦◦</div>
  <div id="status">
    <div class="a t8" style="left:2px;top:5px;color:#555;font-size:6.6px">幻灯片 21 / 75</div>
    <div class="a" style="left:51px;top:3px;width:1px;height:13px;background:#e2e2e2"></div>
    <div class="a t8" style="left:59px;top:5px;color:#555;font-size:6.6px">Office 主题</div>
    <div class="a" style="left:99px;top:3px;width:1px;height:13px;background:#e2e2e2"></div>
    <svg class="a" style="left:110px;top:6px" width="8" height="8" viewBox="0 0 8 8"><path d="M0.500 1h4.500M2.700 1v6M5 3.500h2.500v3.500h-2.500z" stroke="#555" stroke-width="0.800" fill="none"/></svg>
    <div class="a t8" style="left:121px;top:5px;color:#555;font-size:6.6px">融大字体</div>
    <svg class="a" style="left:684px;top:5px" width="9" height="9" viewBox="0 0 9 9"><path d="M4.500 0.700l3.500 1.800v4l-3.500 1.800l-3.500-1.800v-4zM1 2.500l3.500 1.800l3.500-1.800M4.500 4.300v4" stroke="#555" stroke-width="0.700" fill="none"/></svg>
    <div class="a t8" style="left:695px;top:5px;color:#444;font-size:6.6px">智能美化</div>
    <div class="a" style="left:728px;top:10px;width:2px;height:1px;background:#555"></div>
    <svg class="a" style="left:744px;top:6px" width="10" height="8" viewBox="0 0 10 8"><path d="M0 1h5M0 3.800h10M0 6.600h10M6.500 0.300l1 1l1.500-1.300" stroke="#444" stroke-width="0.800" fill="none"/></svg>
    <div class="a t8" style="left:755px;top:5px;color:#444;font-size:6.6px">备注</div>
    <div class="a" style="left:773px;top:10px;width:2px;height:1px;background:#555"></div>
    <svg class="a" style="left:778px;top:5px" width="10" height="9" viewBox="0 0 10 9"><path d="M2 3v-2.300h5v2.300M0.700 3h8.300v5.300h-8.300zM2.500 5h4.500M2.500 6.700h3" stroke="#555" stroke-width="0.800" fill="none"/></svg>
    <div class="a t8" style="left:790px;top:5px;color:#444;font-size:6.6px">批注</div>
    <div class="a" style="left:811px;top:3px;width:1px;height:13px;background:#e0e0e0"></div>
    <div class="a" style="left:816px;top:3px;width:13px;height:13px;border-radius:2px;background:#d4d4d4"></div>
    <svg class="a" style="left:818px;top:5px" width="9" height="9" viewBox="0 0 9 9"><rect x="0.500" y="0.500" width="8" height="8" fill="none" stroke="#555" stroke-width="0.800"/><path d="M2.700 0.500v8" stroke="#555" stroke-width="0.800"/></svg>
    <svg class="a" style="left:833px;top:5px" width="9" height="9" viewBox="0 0 9 9"><path d="M0.500 0.500h2.800v2.800h-2.800zM5.500 0.500h2.800v2.800h-2.800zM0.500 5.500h2.800v2.800h-2.800zM5.500 5.500h2.800v2.800h-2.800z" fill="none" stroke="#444" stroke-width="0.800"/></svg>
    <svg class="a" style="left:847px;top:5px" width="10" height="9" viewBox="0 0 10 9"><path d="M0.500 0.800h3.500l1 0.800l1-0.800h3.500v6.500h-3.500l-1 0.800l-1-0.800h-3.500zM5 1.600v6.500" fill="none" stroke="#444" stroke-width="0.800"/></svg>
    <div class="a" style="left:870px;top:2px;width:17px;height:14px;border-radius:1.500px;background:#f0683f"></div>
    <div class="a" style="left:876px;top:5px;width:0;height:0;border-top:4px solid transparent;border-bottom:4px solid transparent;border-left:6px solid #fff"></div>
    <div class="a" style="left:890px;top:10px;width:2px;height:1px;background:#555"></div>
    <div class="a" style="left:899px;top:3px;width:1px;height:13px;background:#e0e0e0"></div>
    <svg class="a" style="left:906px;top:5px" width="9" height="9" viewBox="0 0 9 9"><rect x="0.700" y="0.700" width="7.600" height="7.600" rx="1.500" fill="none" stroke="#555" stroke-width="0.800"/><rect x="2.800" y="2.800" width="3.400" height="3.400" fill="none" stroke="#555" stroke-width="0.800"/></svg>
    <div class="a t8" style="left:920px;top:5px;color:#555;font-size:6.6px">120%</div>
    <div class="a" style="left:941px;top:10px;width:2px;height:1px;background:#555"></div>
    <div class="a" style="left:949px;top:9.500px;width:6px;height:1.200px;background:#333"></div>
    <div class="a" style="left:963px;top:10px;width:75px;height:1px;background:#cfcfcf"></div>
    <div class="a" style="left:999px;top:7px;width:7px;height:7px;border-radius:4px;background:#f8f8f8;border:1px solid #444"></div>
    <svg class="a" style="left:1044px;top:6px" width="8" height="8" viewBox="0 0 8 8"><path d="M4 0.500v7M0.500 4h7" stroke="#222" stroke-width="1.100"/></svg>
  </div>
</div>
<div id="panel">
  <div class="a" style="left:1065px;top:10px;width:257px;height:720px;background:#17191b"></div>
  <div class="tile" style="top:10px"><!--P1--><svg class="a" style="left:0;top:0" width="257" height="144" viewBox="0 0 257 144"><defs><filter id="b1" x="-20%" y="-20%" width="140%" height="140%"><feGaussianBlur stdDeviation="0.9"/></filter><linearGradient id="fl1" x1="0" y1="0" x2="0" y2="1"><stop offset="0" stop-color="#b4b3b0"/><stop offset="1" stop-color="#9a9a98"/></linearGradient></defs><g filter="url(#b1)"><rect x="-12" y="-12" width="281" height="168" fill="url(#fl1)"/><rect x="-12" y="-12" width="281" height="24" fill="#dcdcda"/><rect x="-12" y="10" width="48" height="62" fill="#c9c3b8"/><polygon points="-12,16 19,19 20,58 -12,66" fill="#eef2f6"/><polygon points="6,19.500 17,20.500 18.500,55 9,57" fill="#4f6896"/><polygon points="22,10 36,10 38,64 26,66" fill="#e4ebf3"/><polygon points="29,10 33,10 37,64 33,65" fill="#5a616b"/><rect x="38" y="12" width="16" height="52" fill="#c4beb2"/><rect x="52" y="10" width="152" height="46" fill="#d3c2a3"/><rect x="52" y="44" width="152" height="12" fill="#cdbb9c"/><rect x="203" y="10" width="66" height="62" fill="#d5cfc3"/><rect x="234" y="20" width="15" height="46" fill="#9a673a"/><rect x="250" y="14" width="19" height="60" fill="#b9bdb6"/><rect x="88" y="-12" width="118" height="13.500" fill="#ffffff"/><rect x="99" y="4" width="82" height="4" fill="#ffffff"/><rect x="20" y="5" width="40" height="3" fill="#fafafa"/><rect x="-12" y="-12" width="40" height="16" fill="#f4f4f4"/><rect x="205" y="5" width="40" height="3" fill="#f6f6f6"/><ellipse cx="49" cy="38" rx="9" ry="16" fill="#46603e" opacity="0.900"/><rect x="46" y="53" width="9" height="12" fill="#e8e8e6"/><ellipse cx="208" cy="35" rx="8" ry="13" fill="#46603e" opacity="0.900"/><rect x="203" y="49" width="8" height="9" fill="#e6e6e4"/><polygon points="0,78 44,73 46,96 20,118 0,118" fill="#e3e3e1"/><polygon points="0,100 40,90 40,112 0,122" fill="#cfcfcd"/><polygon points="3,66 16,64 20,84 6,88" fill="#2e2b2c"/><polygon points="37,56 49,52 50,76 38,78" fill="#dad6cc"/><polygon points="116,53 163,53 226,122 92,122" fill="#523d2f"/><polygon points="150,98 170,96 200,120 140,122" fill="#5e4839"/><polygon points="134,55 143,55 150,98 143,98" fill="#e4e6e0"/><rect x="82" y="45" width="11" height="20" rx="2" fill="#2f2725"/><rect x="88" y="48" width="12" height="20" rx="2" fill="#2d2523"/><rect x="130" y="42" width="11" height="11" rx="2" fill="#33292a"/><rect x="164" y="45" width="8" height="15" rx="2" fill="#2f2725"/><rect x="182" y="51" width="13" height="14" rx="2" fill="#2f2725"/><rect x="197" y="58" width="14" height="16" rx="2" fill="#2f2725"/><polygon points="219,68 240,74 234,108 216,104" fill="#2a2322"/><polygon points="240,74 243,76 236,110 233,108" fill="#e8e8e6"/><polygon points="76,66 88,64 92,88 80,90" fill="#2c2423"/><polygon points="44,78 68,74 76,120 52,122" fill="#e6e6e4"/><polygon points="46,80 70,76 78,120 54,122" fill="#2a2221"/><ellipse cx="109" cy="58" rx="7" ry="11" fill="#1b1b1e"/><ellipse cx="109" cy="45" rx="4" ry="4.500" fill="#c99c82"/><ellipse cx="109" cy="42.500" rx="4.200" ry="2.500" fill="#17171a"/><ellipse cx="101" cy="72" rx="9" ry="14" fill="#3a3d42"/><ellipse cx="102" cy="56" rx="4.500" ry="5" fill="#b88e76"/><ellipse cx="102" cy="53" rx="5" ry="3" fill="#141416"/><polygon points="70,94 84,86 104,90 110,108 100,122 70,124" fill="#161618"/><ellipse cx="91" cy="84" rx="7" ry="8" fill="#caa088"/><ellipse cx="91" cy="78" rx="7.500" ry="4" fill="#151517"/><ellipse cx="172" cy="62" rx="8" ry="9" fill="#1a1a1d"/><ellipse cx="173" cy="52" rx="4" ry="4.500" fill="#b98f78"/><ellipse cx="173" cy="49.500" rx="4.200" ry="2.500" fill="#151517"/><ellipse cx="186" cy="70" rx="11" ry="10" fill="#18181b"/><ellipse cx="183" cy="58" rx="4.500" ry="5" fill="#b98f78"/><ellipse cx="183" cy="55" rx="5" ry="3" fill="#131315"/><polygon points="186,84 204,74 222,80 226,104 200,100 184,94" fill="#1f2840"/><ellipse cx="210" cy="76" rx="6.500" ry="7" fill="#c59a82"/><ellipse cx="211" cy="71" rx="7" ry="4" fill="#141416"/><polygon points="151,84 162,82 164,93 153,95" fill="#d8262a"/><polygon points="165,84 174,83 177,93 168,95" fill="#d8262a"/><ellipse cx="150" cy="81" rx="5" ry="5" fill="#3f6a3c"/><ellipse cx="142" cy="64" rx="3" ry="3" fill="#4a7444"/><rect x="150" y="56" width="3.500" height="8" fill="#e6e6e6"/><polygon points="137,56 142,56 143,62 138,62" fill="#d8363a"/><polygon points="111,74 119,72 120,77 112,79" fill="#f2f2f2"/><polygon points="122,72 129,70 130,76 123,78" fill="#f2f2f2"/><polygon points="125,82 133,80 134,86 126,88" fill="#f2f2f2"/><polygon points="128,94 138,92 139,98 129,100" fill="#f2f2f2"/><polygon points="159,76 173,74 174,80 160,81" fill="#f2f2f2"/><polygon points="173,97 186,96 187,103 174,104" fill="#f4f4f4"/><polygon points="158,66 168,65 169,69 159,70" fill="#eeeeee"/><polygon points="146,103 163,102 164,107 147,108" fill="#c9c9c5"/><polygon points="110,82 122,90 122,100 110,98" fill="#26262a"/><polygon points="112,100 124,98 126,116 114,118" fill="#2b2b30"/><polygon points="140,76 147,75 148,82 141,83" fill="#2c2f30"/><polygon points="214,108 230,106 232,111 216,113" fill="#e8e8ee"/></g></svg><!--/P1-->
    <div class="bar" style="top:120px"><div class="lab" style="width:72px;background:#10cf7c">联席主持人</div><svg class="a" style="left:74px;top:4px" width="15" height="15" viewBox="0 0 15 15"><rect x="0.500" y="0.500" width="14" height="10" rx="1" fill="#fff"/><path d="M4 8c0.500-2.500 2.500-3.500 4.500-3.500v-1.800l3 2.800l-3 2.800v-1.800c-2 0-3.500 0.500-4.500 1.500z" fill="#222"/><path d="M7.500 10.500v2.500M4 13.700h7" stroke="#fff" stroke-width="1.600"/></svg><svg class="a" style="left:94.5px;top:4px" width="13" height="15" viewBox="0 0 13 15"><rect x="4" y="0.500" width="5" height="9" rx="2.500" fill="#fff"/><rect x="4" y="4.500" width="5" height="5" rx="2.500" fill="#45dd45"/><rect x="4" y="4.500" width="5" height="2.500" fill="#45dd45"/><path d="M1.800 6.500v1a4.700 4.700 0 0 0 9.400 0v-1M6.500 12.200v2" stroke="#fff" stroke-width="1.400" fill="none"/></svg><div class="nm" style="left:113px">朱红明 1+X运营中...</div></div>
  </div>
  <div class="tile" style="top:154px"><!--P2--><svg class="a" style="left:0;top:0" width="257" height="144" viewBox="0 0 257 144"><defs><filter id="b2" x="-20%" y="-20%" width="140%" height="140%"><feGaussianBlur stdDeviation="0.9"/></filter><linearGradient id="cur" x1="0" y1="0" x2="1" y2="0"><stop offset="0" stop-color="#7c7469"/><stop offset="0.250" stop-color="#8f877a"/><stop offset="0.500" stop-color="#6a6258"/><stop offset="0.750" stop-color="#867e72"/><stop offset="1" stop-color="#6e665c"/></linearGradient></defs><g filter="url(#b2)"><rect x="-12" y="-12" width="281" height="168" fill="#e4e9e6"/><rect x="-12" y="-12" width="102" height="168" fill="#f4f5f3"/><polygon points="-12,-12 28,-12 29,0 48,66 36,118 -12,120" fill="url(#cur)"/><polygon points="46,-12 63,-12 72,58 58,62" fill="#7f766a"/><polygon points="28,-12 46,-12 58,62 48,66" fill="#fbfbfb"/><rect x="90" y="-12" width="179" height="74" fill="#dce3df"/><rect x="96" y="12" width="10" height="30" fill="#5f8c3c"/><rect x="92" y="26" width="8" height="22" fill="#5a6e58"/><rect x="136" y="26" width="34" height="14" fill="#7f8f84"/><rect x="140" y="18" width="10" height="24" fill="#4a4f4c"/><rect x="150" y="40" width="8" height="12" fill="#6aa04a"/><rect x="170" y="-12" width="99" height="74" fill="#dfe6e3"/><polygon points="172,-12 269,-12 269,128 257,118 196,62 172,52" fill="#dde3e1"/><rect x="218" y="18" width="24" height="8" fill="#f8faf9"/><polygon points="196,0 199,0 202,66 199,66" fill="#f4f6f5"/><polygon points="222,0 226,0 236,100 231,100" fill="#f6f8f7"/><polygon points="172,0 175,0 176,56 173,56" fill="#f2f4f3"/><polygon points="176,0 180,0 186,58 182,58" fill="#c2cbc7"/><polygon points="204,0 207,0 222,86 218,86" fill="#c5cdc9"/><polygon points="240,0 243,0 257,70 257,84" fill="#c8d0cc"/><rect x="150" y="8" width="22" height="16" fill="#cfd8d3"/><rect x="158" y="18" width="6" height="22" fill="#3c4240"/><rect x="104" y="27" width="33" height="20" fill="#fafafa" stroke="#3a3f3d" stroke-width="1"/><polygon points="138,58 196,62 269,128 269,156 150,156" fill="#c4421f"/><polygon points="-12,120 40,112 60,156 -12,156" fill="#b8451f"/><polygon points="30,96 96,58 112,58 80,156 40,156" fill="#2a1c1a"/><rect x="104" y="50" width="13" height="10" fill="#5a5d60"/><rect x="122" y="50" width="14" height="10" fill="#55585b"/><polygon points="107,58 141,58 170,156 62,156" fill="#33201d"/><polygon points="118,60 128,60 132,100 114,100" fill="#4b302a"/><polygon points="150,58 158,60 154,76 147,74" fill="#33363a"/><ellipse cx="95" cy="62" rx="13" ry="14" fill="#161618"/><ellipse cx="90" cy="52" rx="5" ry="5.500" fill="#b78f78"/><ellipse cx="90" cy="49" rx="5.500" ry="3" fill="#121214"/><ellipse cx="70" cy="80" rx="14" ry="17" fill="#4a3a29"/><ellipse cx="69" cy="68" rx="6" ry="7" fill="#c09880"/><ellipse cx="69" cy="64" rx="6.500" ry="3.500" fill="#141416"/><polygon points="26,100 36,84 58,84 68,100 62,120 28,120" fill="#17171a"/><ellipse cx="46" cy="82" rx="8" ry="9" fill="#c49c86"/><ellipse cx="46" cy="76" rx="9" ry="5" fill="#121214"/><polygon points="142,84 154,74 174,78 176,120 150,118" fill="#151517"/><ellipse cx="161" cy="72" rx="6.500" ry="7.500" fill="#c39a84"/><ellipse cx="161" cy="67" rx="7" ry="4" fill="#131315"/><polygon points="172,80 190,84 186,134 170,138" fill="#3a3b3e"/><polygon points="84,82 96,84 92,90 82,88" fill="#c8cacb"/><polygon points="78,96 94,98 88,108 74,106" fill="#b9bbbc"/><polygon points="106,98 122,96 124,104 106,106" fill="#d9d6c8"/><polygon points="112,104 124,100 138,116 126,122" fill="#232527"/><polygon points="126,100 136,96 146,108 138,114" fill="#1a1b1d"/><polygon points="132,98 142,96 148,104 138,108" fill="#a8aaab"/><polygon points="130,120 146,114 152,124 136,132" fill="#8f9189"/><polygon points="142,96 156,92 160,100 146,104" fill="#e8eaf2"/><rect x="129" y="80" width="3.500" height="12" fill="#6b6f66"/><ellipse cx="116" cy="92" rx="6" ry="3" fill="#1c1d20"/><polygon points="116,64 124,64 124,68 116,68" fill="#d8dcd4"/></g></svg><!--/P2-->
    <div class="bar" style="top:120px"><div class="lab" style="width:72px;background:#10cf7c">联席主持人</div><svg class="a" style="left:78px;top:4px" width="14" height="15" viewBox="0 0 14 15"><rect x="4.500" y="0.500" width="5" height="9" rx="2.500" fill="#fff"/><path d="M2.300 6.500v1a4.700 4.700 0 0 0 9.400 0v-1M7 12.200v2" stroke="#fff" stroke-width="1.400" fill="none"/><path d="M1 12.500L12.500 1.500" stroke="#e0362f" stroke-width="1.300"/></svg><div class="nm" style="left:97px">罗圣美</div></div>
  </div>
  <div class="tile" style="top:298px"><!--P3--><svg class="a" style="left:0;top:0" width="257" height="144" viewBox="0 0 257 144"><defs><filter id="b3" x="-20%" y="-20%" width="140%" height="140%"><feGaussianBlur stdDeviation="0.9"/></filter></defs><g filter="url(#b3)"><rect x="-12" y="-12" width="281" height="168" fill="#e7eae8"/><rect x="-12" y="-12" width="92" height="112" fill="#eceeed"/><polygon points="0,0 28,0 31,36 0,52" fill="#3b3330"/><polygon points="0,0 26,0 29,35 0,49" fill="#dcd8d6"/><ellipse cx="10" cy="14" rx="8" ry="9" fill="#b98a88"/><ellipse cx="10" cy="30" rx="6" ry="8" fill="#8f9296"/><polygon points="71,0 80,0 83,38 72,36" fill="#c3242b"/><ellipse cx="212" cy="24" rx="15" ry="12" fill="#4a7f44" opacity="0.800"/><ellipse cx="222" cy="34" rx="8" ry="6" fill="#4a8442" opacity="0.700"/><polygon points="44,52 52,51 54,70 46,72" fill="#4a2c22"/><polygon points="60,100 95,47 100,47 64,156 30,156" fill="#5a261b"/><polygon points="95,47 194,47 230,156 56,156" fill="#6c2c1f"/><polygon points="128,50 154,50 166,156 120,156" fill="#9aa19b"/><polygon points="194,47 230,60 269,70 269,156 230,156" fill="#2e2324"/><rect x="121" y="31" width="20" height="6" rx="1" fill="#1c1c1e"/><rect x="155" y="31" width="20" height="6" rx="1" fill="#1c1c1e"/><rect x="115" y="36" width="22" height="11" rx="1" fill="#2a2a2c"/><rect x="138" y="36" width="22" height="11" rx="1" fill="#2a2a2c"/><rect x="96" y="40" width="20" height="7" fill="#d8c890"/><ellipse cx="139" cy="56" rx="12" ry="8" fill="#57963f" opacity="0.850"/><ellipse cx="146" cy="76" rx="15" ry="12" fill="#4f8e3a" opacity="0.850"/><ellipse cx="148" cy="95" rx="12" ry="10" fill="#5b9a44" opacity="0.800"/><ellipse cx="152" cy="110" rx="7" ry="6" fill="#6aa352"/><polygon points="52,46 62,32 80,36 94,46 92,60 60,62" fill="#2b3550"/><ellipse cx="64" cy="32" rx="7" ry="8" fill="#c09a84"/><ellipse cx="64" cy="27" rx="7.500" ry="4" fill="#151517"/><polygon points="44,74 60,60 76,62 86,76 88,90 66,98 50,96" fill="#a7a8a9"/><polygon points="52,74 62,72 84,88 88,78 84,66 90,70 90,90 66,100" fill="#18181a"/><ellipse cx="74" cy="60" rx="9" ry="10" fill="#b88f78"/><ellipse cx="73" cy="53" rx="9" ry="5" fill="#161618"/><polygon points="0,92 16,82 44,84 62,98 74,112 60,120 0,122" fill="#d9d5e7"/><polygon points="56,104 80,110 84,116 60,118" fill="#c9a088"/><ellipse cx="29" cy="76" rx="10" ry="12" fill="#c8a08a"/><ellipse cx="28" cy="67" rx="11" ry="6" fill="#141416"/><polygon points="0,112 10,108 12,144 0,144" fill="#1a1a1c"/><polygon points="162,44 172,32 192,36 198,52 186,58 166,52" fill="#2a2840"/><ellipse cx="186" cy="30" rx="6" ry="7.500" fill="#b98f78"/><ellipse cx="186" cy="25" rx="6" ry="3" fill="#2a2422"/><polygon points="192,48 204,40 222,46 224,66 200,70 192,60" fill="#2d3038"/><ellipse cx="205" cy="40" rx="7" ry="8.500" fill="#c09882"/><ellipse cx="205" cy="34" rx="7" ry="3.500" fill="#1c1a1a"/><polygon points="196,72 214,58 238,60 240,80 212,92 200,84" fill="#2c4a9a"/><polygon points="200,76 236,62 238,66 202,80M202,82 238,68 239,72 204,86" fill="#d8dcea"/><ellipse cx="224" cy="50" rx="8" ry="9.500" fill="#c29a84"/><ellipse cx="224" cy="43" rx="8" ry="4" fill="#18181a"/><polygon points="204,104 224,78 257,72 257,122 230,122" fill="#2a1c3e"/><polygon points="226,82 246,76 257,80 257,116 228,118" fill="#1b1b1d"/><ellipse cx="246" cy="66" rx="9" ry="11" fill="#c39c86"/><ellipse cx="246" cy="57" rx="9" ry="4.500" fill="#1a1a1c"/><polygon points="194,110 212,106 216,114 198,118" fill="#c9a088"/><polygon points="84,88 100,80 108,96 92,100" fill="#b9b9b6"/><polygon points="98,78 108,72 110,92 106,96" fill="#3a3a3c"/><polygon points="88,66 102,64 104,68 90,70" fill="#f0f0f0"/><polygon points="86,104 116,102 116,112 86,112" fill="#f2f2f2"/><polygon points="164,52 182,50 182,54 164,56" fill="#f0f0f0"/><polygon points="174,64 186,62 188,66 176,68" fill="#f0f0f0"/><polygon points="182,78 198,76 202,84 186,86" fill="#f0ecd8"/><rect x="88" y="102" width="6" height="14" rx="2" fill="#151517"/><ellipse cx="116" cy="80" rx="4" ry="5" fill="#2a1c1a"/><polygon points="196,120 226,118 232,132 200,134" fill="#6a6a64"/><rect x="212" y="124" width="7" height="20" rx="2" fill="#1a1a1c"/><polygon points="62,122 92,122 90,140 60,140" fill="#5c5c5e"/></g></svg><!--/P3-->
    <div class="bar" style="top:120px;left:0;right:0;height:24px;background:rgba(20,20,20,.62)"><svg class="a" style="left:7px;top:5px" width="14" height="15" viewBox="0 0 14 15"><rect x="4.500" y="0.500" width="5" height="9" rx="2.500" fill="#fff"/><path d="M2.300 6.500v1a4.700 4.700 0 0 0 9.400 0v-1M7 12.200v2" stroke="#fff" stroke-width="1.400" fill="none"/><path d="M1 12.500L12.500 1.500" stroke="#e0362f" stroke-width="1.300"/></svg><div class="nm" style="left:26px;line-height:24px">流经岁月</div></div>
  </div>
  <div class="tile" style="top:442px">
    <div class="a" style="left:92px;top:29px;width:72px;height:72px;border-radius:36px;background:#0670fe;color:#fff;font-size:19px;line-height:72px;text-align:center">B</div>
    <div class="bar" style="top:120px;left:2px;background:#0e0f10"><div class="nm" style="left:5px">BONA</div></div>
  </div>
  <div class="tile" style="top:586px"><!--AV--><svg class="a" style="left:0;top:0" width="257" height="144" viewBox="0 0 257 144"><defs><filter id="b4"><feGaussianBlur stdDeviation="0.75"/></filter><clipPath id="cav"><circle cx="128.500" cy="65" r="36"/></clipPath></defs><g clip-path="url(#cav)"><g filter="url(#b4)" transform="translate(92.500,29)"><rect x="-4" y="-4" width="80" height="80" fill="#fdfbfa"/><polygon points="46,-2 76,-2 76,44 60,50 46,30" fill="#c91d20"/><polygon points="52,46 76,38 76,58 54,60" fill="#f5efe6"/><polygon points="54,48 76,42 76,47 55,52" fill="#ef8a2c"/><polygon points="50,54 66,56 62,66 48,66" fill="#cfe3ee"/><ellipse cx="30" cy="5" rx="11" ry="6" fill="#f3c63a"/><ellipse cx="46" cy="3" rx="7" ry="4" fill="#ee9a3a"/><ellipse cx="31" cy="27" rx="20" ry="21" fill="#8f5443"/><polygon points="12,30 16,52 24,54 20,34" fill="#945847"/><polygon points="44,30 52,44 46,54 40,44" fill="#945847"/><ellipse cx="31" cy="36" rx="13.500" ry="10" fill="#fdf0ea"/><polygon points="17,22 46,22 46,31 17,31" fill="#a3624f"/><circle cx="24" cy="35" r="3.200" fill="#e03020"/><circle cx="38.500" cy="35" r="3.200" fill="#e03020"/><circle cx="53" cy="14" r="5" fill="#e02828"/><circle cx="54" cy="13" r="2.500" fill="#fbeeee"/><polygon points="50,18 56,18 54,30 50,30" fill="#d82424"/><polygon points="18,50 46,48 56,72 14,72" fill="#d71f22"/><polygon points="24,48 40,48 38,56 32,60 26,56" fill="#fdf6f2"/><polygon points="29,50 35,50 32,57" fill="#c61c20"/><polygon points="40,48 52,54 48,62 40,58" fill="#fbf6f2"/><polygon points="14,52 24,48 26,58 18,62" fill="#fbf6f2"/><polygon points="26,62 42,62 44,72 24,72" fill="#f0c070"/><polygon points="10,44 30,36 31,38 11,46" fill="#d82424"/><circle cx="13" cy="41" r="2" fill="#d82424"/><polygon points="8,56 18,38 19,39 9,57" fill="#b8b0a8"/></g></g></svg><!--/AV--><div class="a" style="left:73px;top:114px;width:110px;height:30px;background:#1b1c1d"></div>
    <div class="bar" style="top:120px;left:2px;background:linear-gradient(90deg,#0e0f10 0,#0e0f10 71px,rgba(27,28,29,1) 71px,rgba(27,28,29,1) 181px,#0e0f10 181px)"><div class="lab" style="left:1px;width:48px;background:#f5a21d">主持人</div><svg class="a" style="left:54px;top:4px" width="14" height="15" viewBox="0 0 14 15"><rect x="4.500" y="0.500" width="5" height="9" rx="2.500" fill="#fff"/><path d="M2.300 6.500v1a4.700 4.700 0 0 0 9.400 0v-1M7 12.200v2" stroke="#fff" stroke-width="1.400" fill="none"/><path d="M1 12.500L12.500 1.500" stroke="#e0362f" stroke-width="1.300"/></svg><div class="nm" style="left:74px;color:#8c8c8c">1+x运营中心张浩田</div></div>
    
    <svg class="a" style="left:121px;top:126px" width="14" height="8" viewBox="0 0 14 8"><path d="M1 1l6 5.500l6-5.500" stroke="#fff" stroke-width="1.500" fill="none"/></svg>
  </div>
  <div class="a" style="left:1044px;top:350px;width:16px;height:40px;background:#a6a6a6;border-radius:3px 0 0 3px"></div>
  <svg class="a" style="left:1048px;top:363px" width="9" height="14" viewBox="0 0 9 14"><path d="M1.500 1.500l6 5.500l-6 5.500" stroke="#fff" stroke-width="1.400" fill="none"/></svg>
</div>
</body>
</html>
